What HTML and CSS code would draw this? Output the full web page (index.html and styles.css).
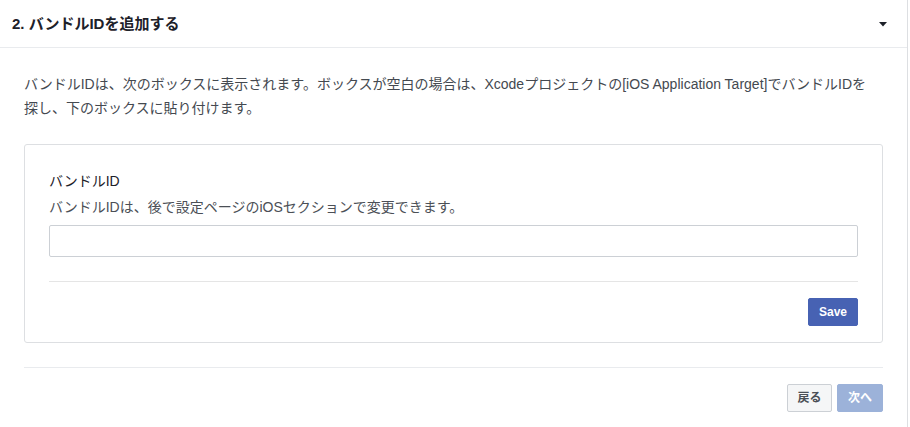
FILE: index.html
```html
<!DOCTYPE html>
<html lang="ja">
<head>
<meta charset="utf-8">
<link rel="stylesheet" href="styles.css">
</head>
<body>
<div class="panel">
  <div class="panel-header">
    <h2 class="panel-title">2. バンドルIDを追加する</h2>
    <svg class="caret" width="8" height="5" viewBox="0 0 8 5"><path d="M0 0H8L4 4.5Z" fill="#1d2129"/></svg>
  </div>
  <div class="panel-body">
    <p class="intro">バンドルIDは、次のボックスに表示されます。ボックスが空白の場合は、Xcodeプロジェクトの[iOS Application Target]でバンドルIDを探し、下のボックスに貼り付けます。</p>
    <div class="card">
      <div class="field-label">バンドルID</div>
      <div class="field-help">バンドルIDは、後で設定ページのiOSセクションで変更できます。</div>
      <input class="field-input" type="text">
      <div class="card-footer">
        <button class="btn btn-primary">Save</button>
      </div>
    </div>
    <div class="panel-footer">
      <button class="btn btn-default">戻る</button>
      <button class="btn btn-disabled">次へ</button>
    </div>
  </div>
</div>
</body>
</html>
```
FILE: styles.css
```css
* { box-sizing: border-box; }
html, body { margin: 0; padding: 0; background: #fff; }
body {
  font-family: "Liberation Sans", "Noto Sans CJK JP", sans-serif;
  color: #444950;
}
.panel {
  width: 908px;
  border-right: 1px solid #dddfe2;
  min-height: 427px;
}
.panel-header {
  height: 48px;
  border-bottom: 1px solid #e9ebee;
  display: flex;
  align-items: center;
  justify-content: space-between;
  padding: 0 20px 0 12px;
}
.panel-title {
  margin: 0;
  font-size: 15px;
  font-weight: bold;
  color: #1d2129;
  line-height: 20px;
}
.caret { display: block; margin-top: 1px; }
.panel-body { padding: 24px 24px 0 24px; }
.intro {
  margin: 0 0 24px 0;
  max-width: 848px;
  font-size: 14px;
  line-height: 24px;
}
.card {
  border: 1px solid #dddfe2;
  border-radius: 3px;
  padding: 24px 24px 16px 24px;
}
.field-label, .field-help {
  font-size: 14px;
  line-height: 24px;
  color: #1d2129;
}
.field-label { margin-bottom: 2px; }
.field-help { color: #4b4f56; }
.field-input {
  display: block;
  width: 100%;
  height: 32px;
  margin: 6px 0 24px 0;
  border: 1px solid #ccd0d5;
  border-radius: 2px;
  font: inherit;
  padding: 0 8px;
}
.card-footer {
  border-top: 1px solid #e5e5e5;
  padding-top: 16px;
  display: flex;
  justify-content: flex-end;
}
.panel-footer {
  margin-top: 24px;
  border-top: 1px solid #e9ebee;
  padding-top: 16px;
  display: flex;
  justify-content: flex-end;
  gap: 5px;
}
.btn {
  height: 28px;
  border-radius: 2px;
  font-family: "Liberation Sans", "Noto Sans CJK JP", sans-serif;
  font-size: 12px;
  font-weight: bold;
  line-height: 26px;
  border: 1px solid transparent;
  padding: 0;
}
.btn-primary {
  background: #4762b3;
  border-color: #4762b3;
  color: #fff;
  width: 50px;
}
.btn-default {
  background: #f5f6f7;
  border-color: #ccd0d5;
  color: #4b4f56;
  width: 45px;
}
.btn-disabled {
  background: #9cb2d9;
  border-color: #9cb2d9;
  color: #fff;
  width: 46px;
}
```
